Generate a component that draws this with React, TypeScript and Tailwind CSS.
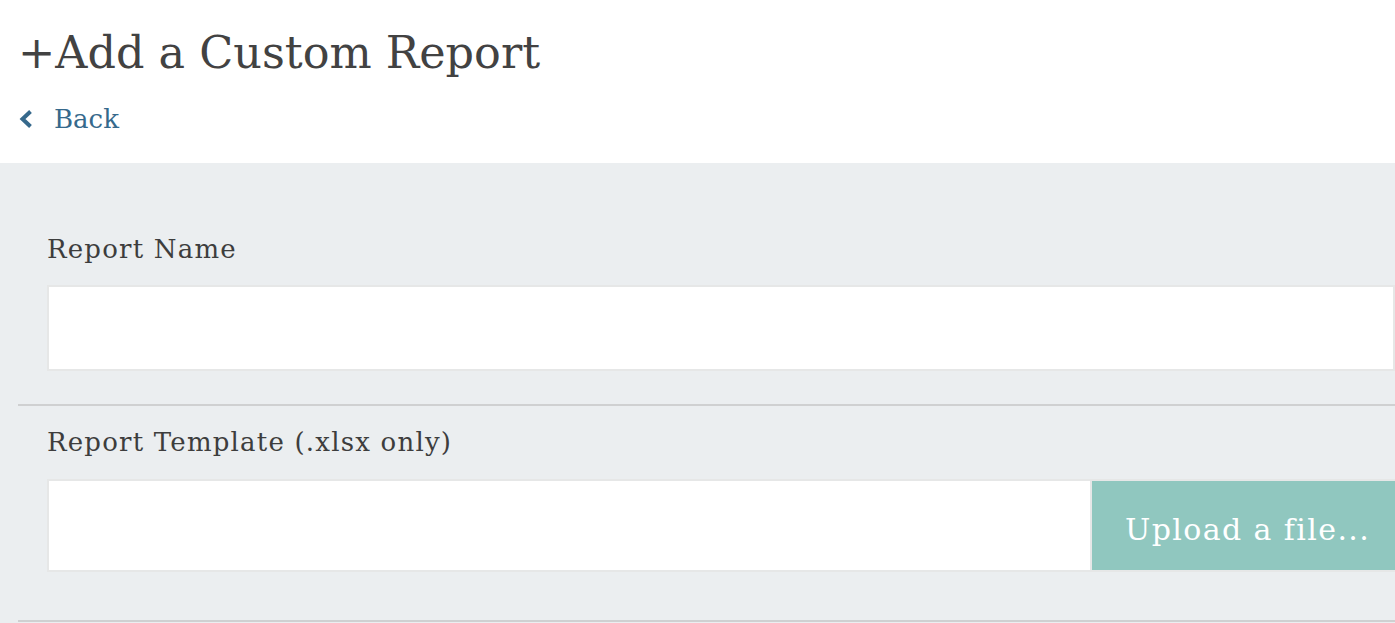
const serif = "font-['DejaVu_Serif','Liberation_Serif',serif]";

export default function App() {
  return (
    <div className={`min-h-screen bg-[#ebeef0] ${serif}`}>
      {/* Header */}
      <header className="h-[163px] bg-white pl-[18px] pt-[22px]">
        <h1 className="text-[44.5px] leading-[62px] text-[#424242]">+Add a Custom Report</h1>
        <a href="#" className="mt-[18px] flex items-center text-[#36698c]">
          <svg width="14" height="18" viewBox="0 0 14 18" className="ml-[1px] shrink-0">
            <path d="M11.5 1.5 L3.5 9 L11.5 16.5" fill="none" stroke="currentColor" strokeWidth="4" />
          </svg>
          <span className="ml-[21px] text-[26px] leading-[34px]">Back</span>
        </a>
      </header>

      {/* Form */}
      <div className="pl-[18px]">
        <section className="border-b-2 border-[#cfd0d1] pl-[29px] pt-[69px] pb-[33px]">
          <label className="block text-[26px] leading-[34px] tracking-[1.2px] text-[#3d3d3d]">Report Name</label>
          <input className="mt-[19px] block h-[86px] w-full border-2 border-[#e6e7e7] bg-white outline-none" />
        </section>
        <section className="border-b-2 border-[#cfd0d1] pl-[29px] pt-[19px] pb-[48px]">
          <label className="block text-[26px] leading-[34px] tracking-[1.2px] text-[#3d3d3d]">Report Template (.xlsx only)</label>
          <div className="mt-[20px] flex h-[93px]">
            <div className="flex-1 border-2 border-r-0 border-[#e6e7e7] bg-white" />
            <div className="w-[2px] bg-[#e6e7e7]" />
            <button className="w-[303px] shrink-0 border-y-2 border-[#e6e7e7] bg-[#90c7bf] pl-[33px] pt-[8px] text-left text-[30px] tracking-[1.4px] text-white">
              Upload a file...
            </button>
          </div>
        </section>
      </div>
    </div>
  );
}
